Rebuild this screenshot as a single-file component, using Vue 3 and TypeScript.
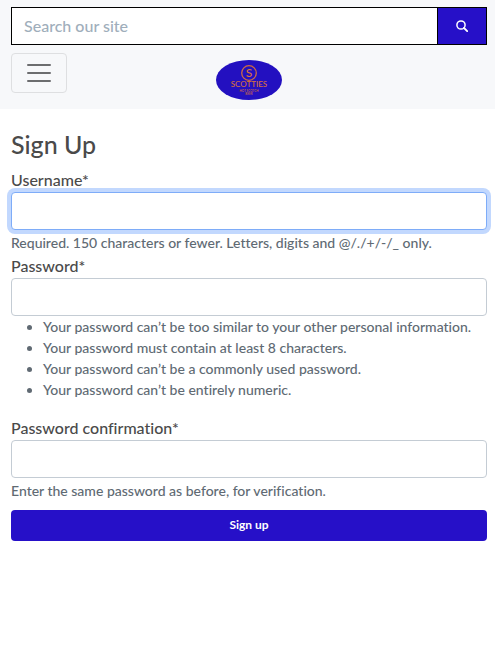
<script setup lang="ts">
import { ref } from 'vue'

const query = ref('')
const username = ref('')
const password = ref('')
const confirmation = ref('')

const passwordRules: string[] = [
  'Your password can’t be too similar to your other personal information.',
  'Your password must contain at least 8 characters.',
  'Your password can’t be a commonly used password.',
  'Your password can’t be entirely numeric.',
]
</script>

<template>
  <div class="page">
    <header class="site-header">
      <form class="search" role="search" @submit.prevent>
        <input v-model="query" class="search-input" type="search" placeholder="Search our site" aria-label="Search our site" />
        <button class="search-button" type="submit" aria-label="Search">
          <svg width="12" height="12" viewBox="0 0 12 12" fill="none" stroke="currentColor" aria-hidden="true">
            <circle cx="5" cy="5" r="4.1" stroke-width="1.5" />
            <path d="M8 8l3.2 3.2" stroke-width="1.8" stroke-linecap="round" />
          </svg>
        </button>
      </form>
      <nav class="nav-row">
        <button class="toggler" type="button" aria-label="Toggle navigation">
          <svg width="30" height="30" viewBox="0 0 30 30" fill="none" stroke="#6c6d6f" aria-hidden="true">
            <path d="M4 7h22M4 15h22M4 23h22" stroke-width="2" stroke-linecap="round" stroke-miterlimit="10" />
          </svg>
        </button>
        <a class="brand" href="#" aria-label="Scotties home">
          <svg width="66" height="40" viewBox="0 0 66 40" aria-hidden="true">
            <ellipse cx="33" cy="20" rx="33" ry="20" fill="#2310c0" />
            <circle cx="33" cy="13" r="7.3" fill="none" stroke="#cf6a42" stroke-width="1.3" />
            <g class="logo-text" fill="#d9703b" text-anchor="middle">
              <text x="33" y="17" font-size="12">S</text>
              <text x="33" y="27" font-size="8">SCOTTIES</text>
              <text x="33" y="32" font-size="3">HOT SCOTCH</text>
              <text x="33" y="35" font-size="3">BEER</text>
            </g>
          </svg>
        </a>
      </nav>
    </header>

    <main class="content">
      <h1>Sign Up</h1>
      <form @submit.prevent>
        <div class="field">
          <label for="username">Username*</label>
          <input id="username" v-model="username" class="control active" type="text" autocomplete="username" aria-describedby="username-help" />
          <small id="username-help" class="help">Required. 150 characters or fewer. Letters, digits and @/./+/-/_ only.</small>
        </div>
        <div class="field">
          <label for="password">Password*</label>
          <input id="password" v-model="password" class="control" type="password" autocomplete="new-password" aria-describedby="password-help" />
          <ul id="password-help" class="rules">
            <li v-for="rule in passwordRules" :key="rule">{{ rule }}</li>
          </ul>
        </div>
        <div class="field">
          <label for="confirmation">Password confirmation*</label>
          <input id="confirmation" v-model="confirmation" class="control" type="password" autocomplete="new-password" aria-describedby="confirmation-help" />
          <small id="confirmation-help" class="help">Enter the same password as before, for verification.</small>
        </div>
        <button class="submit" type="submit">Sign up</button>
      </form>
    </main>
  </div>
</template>

<style>
body {
  background: #fff;
}
</style>

<style scoped>
.page,
.page * {
  box-sizing: border-box;
}

.page {
  font-family: Lato, "Liberation Sans", sans-serif;
  font-size: 16px;
  font-weight: 500;
  font-variant-ligatures: none;
  line-height: 24px;
  color: #4a4a4a;
}

input,
button {
  font: inherit;
}

.site-header {
  padding: 7px 8px 16px 11px;
  background: #f7f8fa;
}

.search {
  display: flex;
  height: 38px;
}

.search-input {
  flex: 1;
  min-width: 0;
  padding: 6px 12px;
  border: 1px solid #000;
  border-radius: 0;
  background: #fff;
  color: #4a4a4a;
  appearance: none;
  outline: none;
}

.search-input::placeholder {
  color: #a0aebb;
  opacity: 1;
}

.search-button {
  display: flex;
  align-items: center;
  justify-content: center;
  width: 49px;
  padding: 0;
  border: 1px solid #000;
  border-left: 0;
  background: #2610c8;
  color: #fff;
}

.nav-row {
  display: grid;
  grid-template-columns: 1fr auto 1fr;
  margin-top: 8px;
}

.toggler {
  display: flex;
  align-items: center;
  justify-content: center;
  width: 56px;
  height: 40px;
  padding: 0;
  border: 1px solid #dedfe1;
  border-radius: 4px;
  background: transparent;
}

.brand {
  display: block;
  padding-top: 7px;
  height: 40px;
}

.brand svg {
  display: block;
}

.logo-text {
  font-family: Lato, sans-serif;
  font-weight: 500;
}

.content {
  padding: 20px 8px 16px 11px;
}

h1 {
  margin: 0 0 8px;
  font-size: 25px;
  font-weight: 500;
  line-height: 31px;
}

.field {
  display: flex;
  flex-direction: column;
}

.control {
  width: 100%;
  height: 38px;
  padding: 6px 12px;
  border: 1px solid #c4ccd4;
  border-radius: 4px;
  background: #fff;
  color: #4a4a4a;
  outline: none;
}

.control.active,
.control:focus {
  border-color: #7eacf8;
  box-shadow: 0 0 0 4px #c2d8fe;
}

.help,
.rules {
  font-size: 14px;
  line-height: 21px;
  color: #606a73;
}

.help {
  margin: 2px 0 1px;
}

.rules {
  margin: 0 0 16px;
  padding-left: 32px;
}

.submit {
  display: block;
  width: 100%;
  margin-top: 8px;
  padding: 4px 8px 6px;
  border: 0;
  border-radius: 4px;
  background: #2610c8;
  color: #fff;
  font-size: 12px;
  font-weight: 700;
  line-height: 21px;
}
</style>
